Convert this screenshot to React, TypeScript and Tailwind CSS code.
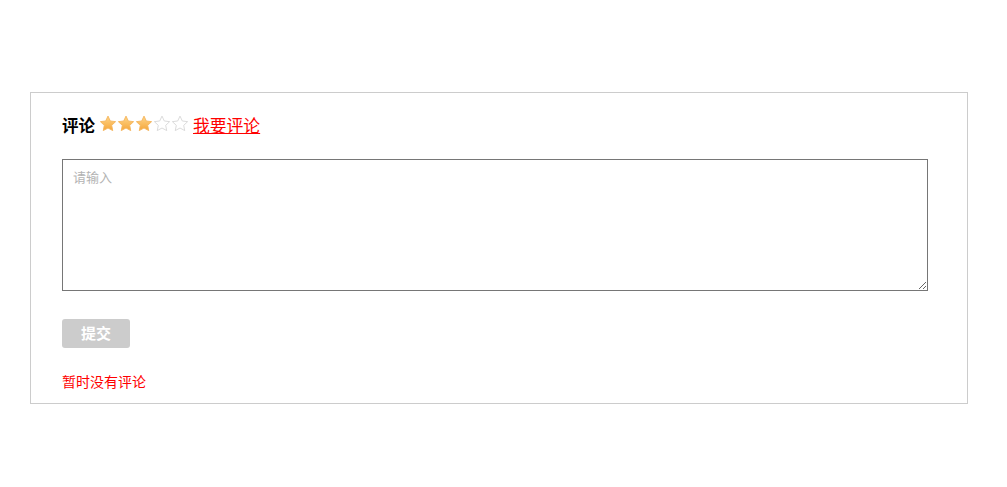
import { useState } from 'react'

// Simple five-point star, filled or outlined
function Star({ filled }: { filled: boolean }) {
  return (
    <svg width="18" height="17" viewBox="0 0 24 23" className="block">
      <defs>
        <linearGradient id="starFill" x1="0" y1="0" x2="0" y2="1">
          <stop offset="0%" stopColor="#ffd68a" />
          <stop offset="100%" stopColor="#f5a63a" />
        </linearGradient>
      </defs>
      <path
        d="M12 1.5l3.1 6.6 7.2.9-5.3 5 1.4 7.1L12 17.6 5.6 21.1 7 14l-5.3-5 7.2-.9z"
        fill={filled ? 'url(#starFill)' : '#fff'}
        stroke={filled ? '#f4b45c' : '#d6d6d6'}
        strokeWidth="1.2"
        strokeLinejoin="round"
      />
    </svg>
  )
}

export default function App() {
  const [text, setText] = useState('')
  const rating = 3

  return (
    <div
      className="w-[1007px] h-[487px] bg-white pt-[92px] px-[30px]"
      style={{ fontFamily: '"Noto Sans CJK SC", "Liberation Sans", sans-serif' }}
    >
      <div className="w-[938px] h-[312px] border border-[#cccccc] pl-[31px] pt-[21px]">
        {/* Header: title, stars and link */}
        <div className="flex items-center h-[22px]">
          <span className="text-[16.5px] font-bold text-black leading-[22px]">评论</span>
          <div className="flex items-center ml-[4px] mt-[-4px]">
            {[1, 2, 3, 4, 5].map((i) => (
              <Star key={i} filled={i <= rating} />
            ))}
          </div>
          <a href="#" className="ml-[4px] text-[16.8px] text-[#ff0000] underline leading-[22px]">
            我要评论
          </a>
        </div>

        <textarea
          value={text}
          onChange={(e) => setText(e.target.value)}
          placeholder="请输入"
          className="block mt-[23px] w-[866px] h-[132px] border border-[#767676] px-[10px] py-[8px] text-[13px] leading-[17px] outline-none placeholder:text-[#b3b3b3]"
        />

        <button
          className="block mt-[28px] w-[68px] h-[29px] rounded-[3px] bg-[#cccccc] text-white text-[15px] font-bold"
        >
          提交
        </button>

        <p className="mt-[24px] text-[14px] leading-[18px] text-[#ff0000]">暂时没有评论</p>
      </div>
    </div>
  )
}
